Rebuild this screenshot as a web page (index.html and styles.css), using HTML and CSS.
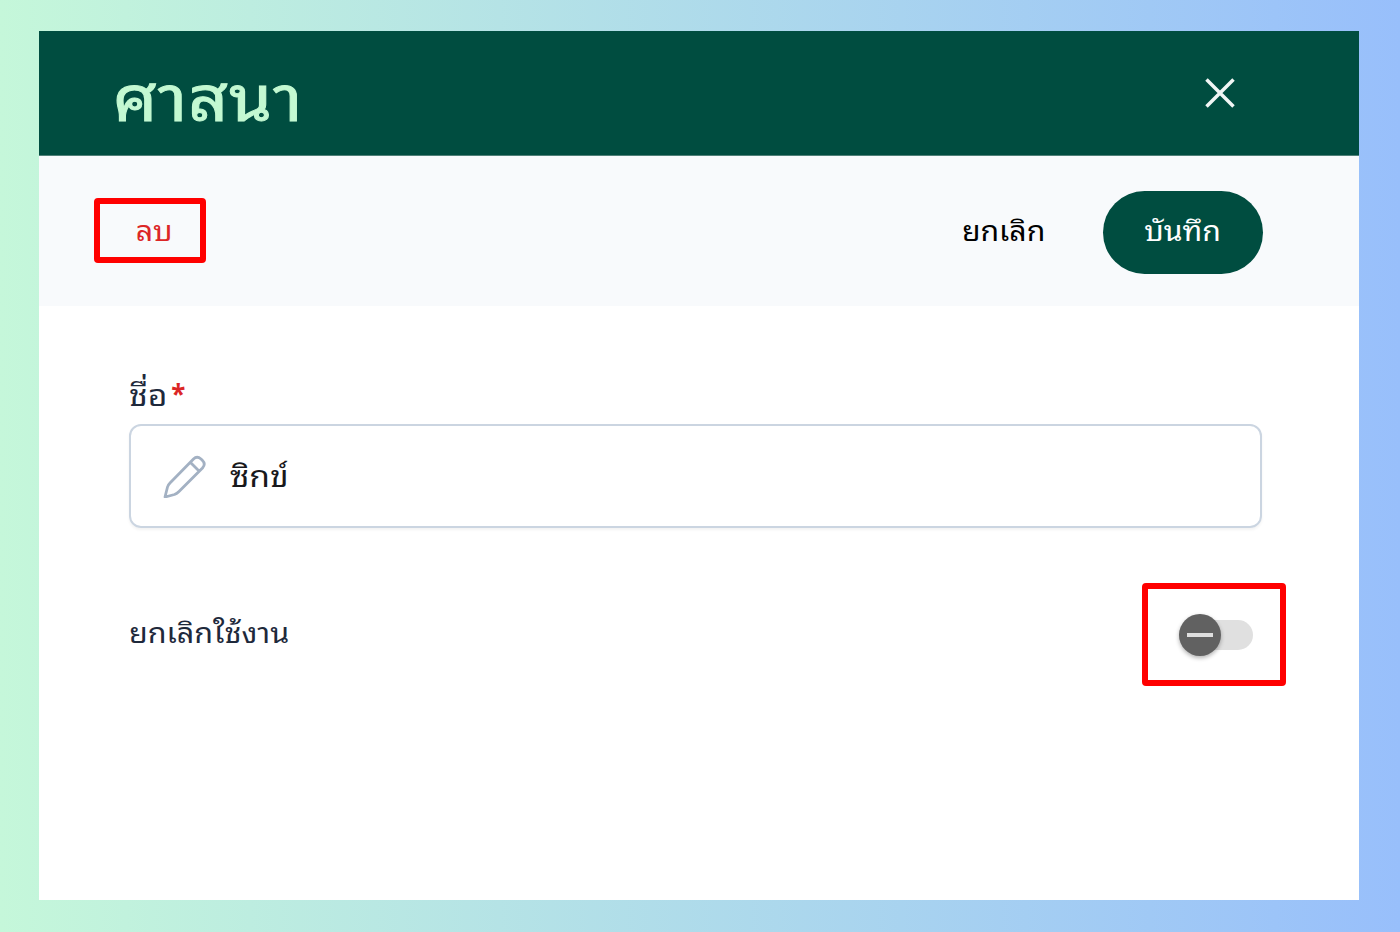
FILE: index.html
```html
<!DOCTYPE html>
<html lang="th">
<head>
<meta charset="utf-8">
<title>ศาสนา</title>
<link rel="stylesheet" href="styles.css">
</head>
<body>
<main class="dialog">
  <header class="dialog-header">
    <h1 class="title">ศาสนา</h1>
    <button class="close" aria-label="ปิด"><svg width="32" height="32" viewBox="0 0 32 32"><path d="M2.500 2.500 29.500 29.500M29.500 2.500 2.500 29.500"/></svg></button>
  </header>
  <div class="toolbar">
    <button class="delete"><span class="wide">ลบ</span></button>
    <div class="actions">
      <button class="cancel"><span class="wide">ยกเลิก</span></button>
      <button class="save"><span class="wide">บันทึก</span></button>
    </div>
  </div>
  <form class="form">
    <label class="label"><span class="label-text">ชื่อ</span><span class="required">*</span></label>
    <div class="field">
      <svg class="pencil" width="44" height="44" viewBox="0 0 44 44"><path d="M2 43 4.500 33Q5 31 7 29L30.500 5Q34 1.500 38 5L39.500 6.500Q43 10 39.500 14L16 37.500Q14 39.500 11.500 40.500ZM27.500 8.500 36 17"/></svg>
      <span class="value">ซิกข์</span>
    </div>
    <div class="switch-row">
      <span class="switch-label">ยกเลิกใช้งาน</span>
      <div class="switch-frame"><span class="track"><span class="thumb"><span class="minus"></span></span></span></div>
    </div>
  </form>
</main>
</body>
</html>
```
FILE: styles.css
```css
* { box-sizing: border-box; }
body {
  margin: 0;
  height: 932px;
  padding: 31px 41px 32px 39px;
  overflow: hidden;
  background: linear-gradient(90deg, #c5f7da, #98bffb);
  font-family: "Noto Sans Thai Looped", "Noto Looped Thai", Loma, Waree, Garuda, "Noto Serif Thai", Tahoma, sans-serif;
  font-size: 28px;
}
button { border: 0; background: none; font: inherit; padding: 0; }
span { white-space: nowrap; }
.wide { display: inline-block; transform: scaleX(1.08); }
.dialog { height: 869px; background: #fff; }
.dialog-header {
  height: 125px;
  padding: 0 123px 0 74px;
  display: flex;
  justify-content: space-between;
  align-items: center;
  background: #004d40;
  border-bottom: 1px solid #4f8078;
}
.title {
  margin: 0;
  padding-bottom: 2px;
  font-size: 64px;
  line-height: 1;
  font-weight: 400;
  letter-spacing: 1px;
  color: #c3f9d2;
  -webkit-text-stroke: 1px #c3f9d2;
  transform: scaleX(1.08);
  transform-origin: left;
}
.close svg { display: block; fill: none; stroke: #f1f6f5; stroke-width: 3.5; }
.toolbar {
  height: 150px;
  padding: 0 96px 0 55px;
  display: flex;
  justify-content: space-between;
  align-items: center;
  background: #f8fafc;
}
.delete {
  width: 112px;
  height: 65px;
  margin-bottom: 2px;
  padding: 0 0 4px 9px;
  border: 6px solid #f00;
  border-radius: 4px;
  color: #dc2626;
}
.actions { display: flex; align-items: center; gap: 61px; padding-top: 2px; }
.cancel { padding-bottom: 8px; color: #000; }
.save {
  width: 160px;
  height: 83px;
  padding-bottom: 8px;
  border-radius: 42px;
  background: #004d40;
  color: #fff;
}
.form { padding: 65px 74px 0 90px; color: #1e293b; }
.label { display: flex; height: 53px; align-items: center; gap: 8px; }
.label-text {
  padding-bottom: 11px;
  font-size: 30px;
  transform: scaleX(1.12);
  transform-origin: left;
}
.required { padding-bottom: 11px; font-weight: 700; font-size: 26px; color: #dc2626; }
.field {
  width: 1133px;
  height: 104px;
  padding-left: 32px;
  border: 2px solid #cbd5e1;
  border-radius: 12px;
  box-shadow: 0 2px 3px rgba(0, 0, 0, .05);
  display: flex;
  align-items: center;
  gap: 23px;
}
.value {
  padding-bottom: 6px;
  font-size: 30px;
  color: #18181b;
  transform: scaleX(1.12);
  transform-origin: left;
}
.pencil { fill: none; stroke: #a3b1c3; stroke-width: 2.8; stroke-linejoin: round; }
.switch-row {
  width: 1157px;
  display: flex;
  justify-content: space-between;
  align-items: center;
  margin-top: 55px;
}
.switch-label { padding-bottom: 8px; transform: scaleX(1.09); transform-origin: left; }
.switch-frame {
  width: 144px;
  height: 103px;
  border: 6px solid #f00;
  border-radius: 4px;
  display: flex;
  align-items: center;
  padding-left: 31px;
}
.track { width: 74px; height: 30px; border-radius: 15px; background: #e0e0e0; display: flex; align-items: center; }
.thumb {
  width: 42px;
  height: 42px;
  border-radius: 50%;
  background: #616161;
  box-shadow: 0 2px 4px rgba(0, 0, 0, .3);
  display: flex;
  align-items: center;
  justify-content: center;
}
.minus { width: 26px; height: 4px; background: #dedede; }
```
